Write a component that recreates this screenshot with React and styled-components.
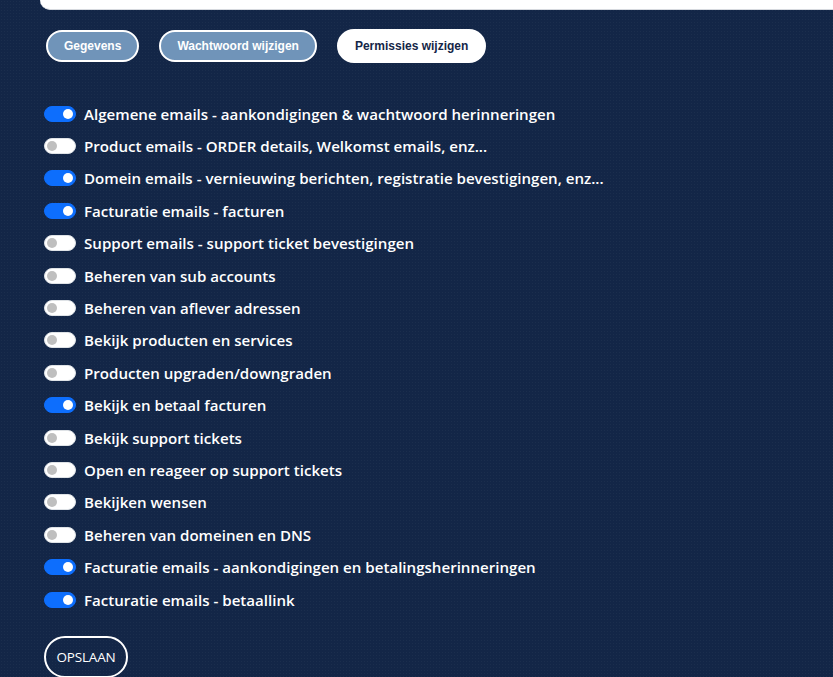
import styled, { createGlobalStyle } from "styled-components"
import { useState } from "react"

const GlobalStyle = createGlobalStyle`
    html, body {
        margin: 0;
        padding: 0;
        background-color: #132647;
        background-image: radial-gradient(rgba(255, 255, 255, 0.035) 1px, transparent 1px);
        background-size: 3px 3px;
        overflow: hidden;
    }
`

const Page = styled.div`
    width: 100%;
    min-height: 677px;
    overflow: hidden;
    font-family: "Open Sans", "Noto Sans", sans-serif;
    color: white;
`

const TopCard = styled.div`
    height: 9px;
    margin-left: 40px;
    margin-right: -30px;
    background: white;
    border-bottom-left-radius: 16px;
    border-bottom: 1px solid #d6d9de;
`

const Tabs = styled.div`
    display: flex;
    align-items: center;
    gap: 20px;
    margin: 19px 0 0 46px;
`

const Tab = styled.button`
    font-family: "Liberation Sans", Arial, sans-serif;
    font-size: 12px;
    font-weight: 700;
    height: ${p => p.active ? "34px" : "32px"};
    padding: 0 16px;
    border-radius: 17px;
    border: 2px solid white;
    background-color: ${p => p.active ? "white" : "#7094b9"};
    color: ${p => p.active ? "#142647" : "white"};
    cursor: pointer;
`

const List = styled.div`
    display: flex;
    flex-direction: column;
    margin: 34.5px 0 0 44px;
`

const Row = styled.label`
    display: flex;
    align-items: center;
    gap: 8px;
    height: 32.4px;
    font-size: 15.1px;
    font-weight: 600;
    cursor: pointer;
`

const Track = styled.span`
    position: relative;
    flex: none;
    width: 32px;
    height: 16px;
    box-sizing: border-box;
    border-radius: 8px;
    background-color: ${p => p.on ? "#0d6efd" : "white"};
    border: 1px solid ${p => p.on ? "#0d6efd" : "#dee2e6"};
`

const Knob = styled.span`
    position: absolute;
    top: 2px;
    left: ${p => p.on ? "18px" : "2px"};
    width: 10px;
    height: 10px;
    border-radius: 50%;
    background-color: ${p => p.on ? "white" : "#bfbfbf"};
`

const SaveButton = styled.button`
    margin: 20px 0 0 44px;
    width: 84px;
    height: 42px;
    border-radius: 21px;
    border: 2px solid white;
    background: transparent;
    color: white;
    font-family: "Open Sans", "Noto Sans", sans-serif;
    font-size: 13.5px;
    letter-spacing: -0.2px;
    cursor: pointer;
`

const permissions = [
    ["Algemene emails - aankondigingen & wachtwoord herinneringen", true],
    ["Product emails - ORDER details, Welkomst emails, enz...", false],
    ["Domein emails - vernieuwing berichten, registratie bevestigingen, enz...", true],
    ["Facturatie emails - facturen", true],
    ["Support emails - support ticket bevestigingen", false],
    ["Beheren van sub accounts", false],
    ["Beheren van aflever adressen", false],
    ["Bekijk producten en services", false],
    ["Producten upgraden/downgraden", false],
    ["Bekijk en betaal facturen", true],
    ["Bekijk support tickets", false],
    ["Open en reageer op support tickets", false],
    ["Bekijken wensen", false],
    ["Beheren van domeinen en DNS", false],
    ["Facturatie emails - aankondigingen en betalingsherinneringen", true],
    ["Facturatie emails - betaallink", true],
]

const App = () => {
    const [values, setValues] = useState(permissions.map(p => p[1]))

    const toggle = i => setValues(v => v.map((x, j) => j === i ? !x : x))

    return <Page>
        <GlobalStyle />
        <TopCard />
        <Tabs>
            <Tab>Gegevens</Tab>
            <Tab>Wachtwoord wijzigen</Tab>
            <Tab active>Permissies wijzigen</Tab>
        </Tabs>

        <List>
            {permissions.map(([label], i) => (
                <Row key={label} onClick={() => toggle(i)}>
                    <Track on={values[i]}><Knob on={values[i]} /></Track>
                    {label}
                </Row>
            ))}
        </List>

        <SaveButton>OPSLAAN</SaveButton>
    </Page>
}

export default App
